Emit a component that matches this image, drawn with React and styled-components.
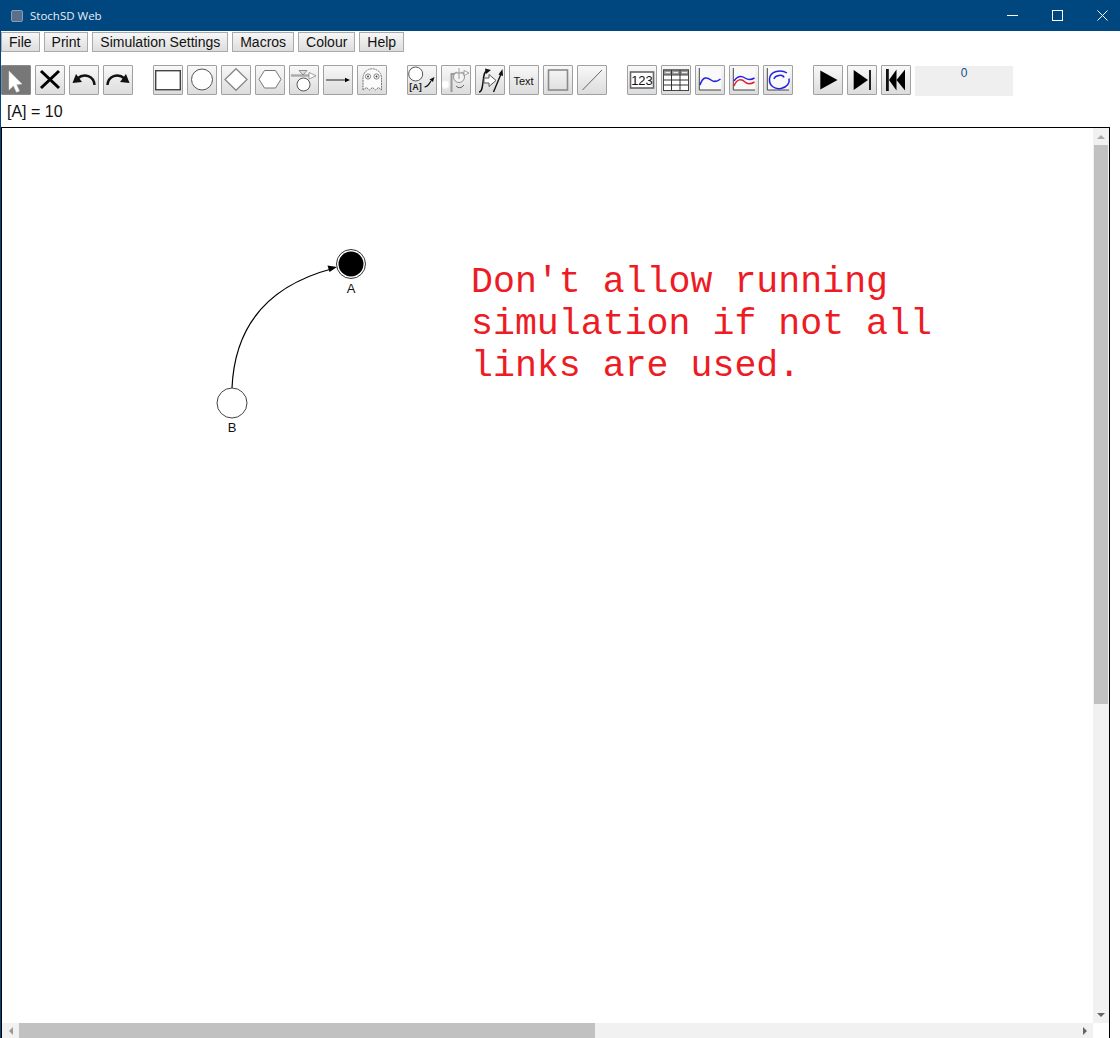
import styled, { createGlobalStyle } from "styled-components";

const GlobalStyle = createGlobalStyle`
  html, body {
    margin: 0;
    padding: 0;
    background: #fff;
    overflow: hidden;
  }
`;

const Window = styled.div`
  box-sizing: border-box;
  width: 1120px;
  height: 1038px;
  display: flex;
  flex-direction: column;
  border-left: 1px solid #00467f;
  background: #fff;
  overflow: hidden;
  font-family: "Liberation Sans", Arial, sans-serif;
`;

const TitleBar = styled.div`
  flex: none;
  height: 31px;
  margin-left: -1px;
  display: flex;
  align-items: center;
  background: #00467f;
  color: #e8eef4;
  font-family: "Open Sans", "Noto Sans", sans-serif;
  font-size: 11.5px;
`;

const AppIcon = styled.div`
  box-sizing: border-box;
  width: 12px;
  height: 12px;
  margin: 0 7px 0 11px;
  background: #58708c;
  border: 1px solid #8a9db2;
  border-radius: 2px;
`;

const WindowControls = styled.div`
  margin-left: auto;
  margin-right: -5px;
  display: flex;
`;

const WindowButton = styled.div`
  width: 45px;
  height: 31px;
  display: flex;
  align-items: center;
  justify-content: center;
`;

const MenuBar = styled.div`
  flex: none;
  display: flex;
  gap: 4px;
  padding: 1px 0 0 0;
`;

const MenuButton = styled.div`
  box-sizing: border-box;
  height: 20px;
  padding: 0 7px;
  display: flex;
  align-items: center;
  border: 1px solid #aaa;
  background: linear-gradient(#f7f7f7, #dddddd);
  color: #111;
  font-size: 14px;
`;

const ToolBar = styled.div`
  flex: none;
  display: flex;
  margin-top: 13px;
  padding-left: 0;
`;

const ToolGroup = styled.div`
  display: flex;
  gap: 4px;
  margin-right: ${(p) => p.$after ?? 0}px;
`;

const ToolButton = styled.div`
  box-sizing: border-box;
  width: 30px;
  height: 30px;
  border: 1px solid ${(p) => (p.$active ? "#8a8a8a" : "#a0a0a0")};
  border-radius: 1px;
  background: ${(p) => (p.$active ? "#777" : "linear-gradient(#f8f8f8, #dcdcdc)")};
  svg {
    display: block;
  }
`;

const Counter = styled.div`
  width: 98px;
  height: 30px;
  margin: 1px 0 0 4px;
  background: #efefef;
  color: #14508c;
  font-size: 12px;
  line-height: 14px;
  text-align: center;
`;

const StatusLine = styled.div`
  flex: none;
  height: 22px;
  padding: 5px 0 4px 6px;
  color: #111;
  font-size: 16px;
  line-height: 22px;
`;

const Canvas = styled.div`
  flex: 1;
  box-sizing: border-box;
  width: 1109px;
  min-height: 0;
  display: grid;
  grid-template-columns: 1fr 16px;
  grid-template-rows: 1fr 15px;
  border: 1px solid #000;
  border-bottom: none;
`;

const Drawing = styled.div`
  position: relative;
  overflow: hidden;
`;

const DiagramLines = styled.svg`
  position: absolute;
  left: 0;
  top: 0;
`;

const NodeLabel = styled.div`
  position: absolute;
  left: ${(p) => p.$x}px;
  top: ${(p) => p.$y}px;
  width: 30px;
  text-align: center;
  color: #111;
  font-size: 13px;
  line-height: 14px;
`;

const Note = styled.div`
  position: absolute;
  left: 469px;
  top: 134px;
  color: #ed1c24;
  font-family: "Liberation Mono", "Courier New", monospace;
  font-size: 36.6px;
  line-height: 42px;
  white-space: pre;
`;

const VerticalScroll = styled.div`
  display: flex;
  flex-direction: column;
  align-items: center;
  background: #f1f1f1;
`;

const HorizontalScroll = styled.div`
  display: flex;
  align-items: center;
  background: #f1f1f1;
`;

const ScrollEnd = styled.div`
  flex: none;
  width: ${(p) => (p.$vertical ? "16px" : "17px")};
  height: ${(p) => (p.$vertical ? "17px" : "15px")};
  display: flex;
  align-items: center;
  justify-content: center;
`;

const VerticalThumb = styled.div`
  flex: none;
  width: 14px;
  height: 559px;
  background: #c1c1c1;
`;

const HorizontalThumb = styled.div`
  flex: none;
  width: 576px;
  height: 15px;
  background: #c1c1c1;
`;

const Spacer = styled.div`
  flex: 1;
`;

const Arrow = ({ dir, color = "#666" }) => {
  const points = {
    up: "0,6 4,2 8,6",
    down: "0,2 8,2 4,6",
    left: "6,0 6,8 2,4",
    right: "2,0 2,8 6,4",
  };
  return (
    <svg width="8" height="8" viewBox="0 0 8 8">
      <polygon points={points[dir]} fill={color} />
    </svg>
  );
};

// all icons are drawn in the 30x30 coordinates of the button
const Icon = ({ children }) => (
  <svg width="28" height="28" viewBox="1 1 28 28">
    {children}
  </svg>
);

const icons = {
  select: <polygon points="8,6 21,19 15.5,19.5 18.5,26 15.5,27.2 12.5,20.8 8,25" fill="#fff" stroke="#ddd" strokeWidth="0.5" />,
  remove: <path d="M6 6 L24 23 M24 6 L6 23" stroke="#000" strokeWidth="3" fill="none" />,
  undo: (
    <>
      <path d="M25.5 20 C25 11 15 7.5 8.5 13.5" stroke="#111" strokeWidth="2.4" fill="none" />
      <polygon points="3.5,18 13,17 7,9" fill="#111" />
    </>
  ),
  redo: (
    <>
      <path d="M4.5 20 C5 11 15 7.5 21.5 13.5" stroke="#111" strokeWidth="2.4" fill="none" />
      <polygon points="26.5,18 17,17 23,9" fill="#111" />
    </>
  ),
  stock: <rect x="2.7" y="5.7" width="24.6" height="19" fill="#fff" stroke="#444" strokeWidth="1.4" />,
  aux: <circle cx="15" cy="14.5" r="10.5" fill="#fff" stroke="#555" strokeWidth="1" />,
  param: <polygon points="15,3.7 26,14.5 15,25.3 4,14.5" fill="#fff" stroke="#888" strokeWidth="1.3" />,
  hexagon: <polygon points="4,14.3 9.5,5.5 20.5,5.5 26,14.3 20.5,23 9.5,23" fill="#fff" stroke="#777" strokeWidth="1" />,
  flow: (
    <>
      <path d="M2 10.5 H20" stroke="#aaa" strokeWidth="2.4" />
      <polygon points="20,7.5 27,10.8 20,14" fill="#fff" stroke="#888" strokeWidth="0.8" />
      <polygon points="10,5.5 18,5.5 14,10" fill="#ddd" stroke="#777" strokeWidth="0.8" />
      <circle cx="14.5" cy="19.5" r="6.5" fill="#fff" stroke="#555" strokeWidth="1" />
    </>
  ),
  link: (
    <>
      <path d="M3 15 H23" stroke="#222" strokeWidth="1" />
      <polygon points="22,12.7 27,15 22,17.3" fill="#000" />
    </>
  ),
  ghost: (
    <>
      <path
        d="M6 25 V13 A9.2 9.2 0 0 1 24.5 13 V25 L21.5 22.5 L18.5 25 L15.5 22.5 L12.5 25 L9.5 22.5 Z"
        fill="#fafafa"
        stroke="#777"
        strokeWidth="1"
        strokeDasharray="2 0.7"
      />
      <circle cx="11" cy="11.5" r="2.6" fill="#fff" stroke="#666" strokeWidth="0.8" />
      <circle cx="19.5" cy="11.5" r="2.6" fill="#fff" stroke="#666" strokeWidth="0.8" />
      <circle cx="11" cy="11.5" r="0.9" fill="#333" />
      <circle cx="19.5" cy="11.5" r="0.9" fill="#333" />
    </>
  ),
  ghostLink: (
    <>
      <circle cx="8.7" cy="9" r="7" fill="#fff" stroke="#555" strokeWidth="1" />
      <text x="8.5" y="24.5" textAnchor="middle" fontSize="9" fontWeight="bold" fontFamily="Liberation Sans" fill="#222">
        [A]
      </text>
      <path d="M17.5 22 C21 22 22 19 24 16" stroke="#111" strokeWidth="1.2" fill="none" />
      <polygon points="22.5,14.5 27.5,12 26,17" fill="#111" />
    </>
  ),
  takeoff: (
    <>
      <circle cx="4.3" cy="19.5" r="4" fill="#fff" stroke="#eee" strokeWidth="1" />
      <path d="M10.5 27 V9 H16" stroke="#999" strokeWidth="2" fill="none" />
      <circle cx="18" cy="12" r="5.5" fill="#f4f4f4" stroke="#888" strokeWidth="0.9" />
      <circle cx="18" cy="4.5" r="3" fill="#fafafa" />
      <path d="M18 3 V14 M13.5 8 H25" stroke="#999" strokeWidth="1" />
      <polygon points="23,5.5 28,8 23,10.5" fill="#fff" stroke="#888" strokeWidth="0.8" />
      <path d="M15 21 Q19 25 23 20" stroke="#666" strokeWidth="1" fill="none" />
    </>
  ),
  curves: (
    <>
      <path d="M4 27 C10 27 6 7 12 6" stroke="#111" strokeWidth="1.4" fill="none" />
      <polygon points="10,3.5 16,5 11,9" fill="#111" />
      <path d="M9 13 H14 V9.5 L21 15.5 L14 21.5 V18 H9 Z" fill="#fff" stroke="#555" strokeWidth="1" />
      <path d="M18.5 27 L26 9" stroke="#111" strokeWidth="1.4" />
      <polygon points="23.5,9.5 27.5,4 28,11" fill="#111" />
    </>
  ),
  text: (
    <text x="14.5" y="20" textAnchor="middle" fontSize="11" fontFamily="Liberation Sans" fill="#111">
      Text
    </text>
  ),
  frame: <rect x="5.5" y="5" width="19" height="20" fill="none" stroke="#8a8a8a" strokeWidth="1.6" />,
  line: <path d="M5.5 25 L25 5" stroke="#666" strokeWidth="1" />,
  number: (
    <>
      <rect x="3.5" y="7" width="23" height="16" fill="#fff" stroke="#666" strokeWidth="1.6" />
      <text x="15" y="20" textAnchor="middle" fontSize="13" fontFamily="Liberation Sans" fill="#111">
        123
      </text>
    </>
  ),
  table: (
    <>
      <rect x="2.5" y="5" width="25" height="20.5" fill="#fff" stroke="#444" strokeWidth="1" />
      <rect x="2.5" y="5" width="25" height="5" fill="#999" stroke="#444" strokeWidth="1" />
      <path d="M10.5 5 V25.5 M19 5 V25.5 M2.5 15 H27.5 M2.5 20 H27.5" stroke="#333" strokeWidth="1" />
      <path d="M4.5 7.5 H9 M12.5 7.5 H17 M21 7.5 H26" stroke="#eee" strokeWidth="1" />
    </>
  ),
  timeplot: (
    <>
      <rect x="4.3" y="3" width="22" height="22" fill="#fafafa" />
      <path d="M4.3 3 V25 H26" stroke="#444" strokeWidth="1" fill="none" />
      <path d="M5 20 C8 11 12 12 16 15 S23 16 25.5 14" stroke="#2222e8" strokeWidth="1.5" fill="none" />
    </>
  ),
  compare: (
    <>
      <rect x="4.3" y="3" width="22" height="22" fill="#fafafa" />
      <path d="M4.3 3 V25 H26" stroke="#444" strokeWidth="1" fill="none" />
      <path d="M5 16 C9 10 13 11 16 13 S22 15 25.5 13" stroke="#2222e8" strokeWidth="1.5" fill="none" />
      <path d="M5 21 C8 13 13 14 16 17 S22 19 25.5 17" stroke="#e81c2c" strokeWidth="1.5" fill="none" />
    </>
  ),
  xyplot: (
    <>
      <rect x="4.3" y="3" width="22" height="22" fill="#fafafa" />
      <path d="M4.3 3 V25 H26" stroke="#444" strokeWidth="1" fill="none" />
      <path
        d="M11 14 C12 10 20 9 21 12.5 M24 8 C18 4 7 6 6.5 14 C6 21 12 24.5 18 23.5 C24 22.5 27 18 26 13.5"
        stroke="#2222e8"
        strokeWidth="1.5"
        fill="none"
      />
    </>
  ),
  play: <polygon points="7.3,5.5 24.5,15 7.3,24.5" fill="#000" />,
  step: (
    <>
      <polygon points="6.7,5 21,15 6.7,25" fill="#000" />
      <rect x="22" y="5" width="2" height="20" fill="#222" />
    </>
  ),
  rewind: (
    <>
      <rect x="5" y="4" width="2.8" height="22" fill="#111" />
      <polygon points="8,15 15.5,4.5 15.5,25.5" fill="#000" />
      <polygon points="15.5,15 24,4.5 24,25.5" fill="#000" />
    </>
  ),
};

const toolGroups = [
  { after: 20, tools: ["select", "remove", "undo", "redo"] },
  { after: 20, tools: ["stock", "aux", "param", "hexagon", "flow", "link", "ghost"] },
  { after: 20, tools: ["ghostLink", "takeoff", "curves", "text", "frame", "line"] },
  { after: 20, tools: ["number", "table", "timeplot", "compare", "xyplot"] },
  { after: 0, tools: ["play", "step", "rewind"] },
];

const menus = ["File", "Print", "Simulation Settings", "Macros", "Colour", "Help"];

const App = () => {
  return (
    <Window>
      <GlobalStyle />
      <TitleBar>
        <AppIcon />
        StochSD Web
        <WindowControls>
          <WindowButton>
            <svg width="11" height="11" viewBox="0 0 11 11">
              <path d="M0 5.5 H11" stroke="#fff" strokeWidth="1" />
            </svg>
          </WindowButton>
          <WindowButton>
            <svg width="11" height="11" viewBox="0 0 11 11">
              <rect x="0.5" y="0.5" width="10" height="10" fill="none" stroke="#fff" strokeWidth="1" />
            </svg>
          </WindowButton>
          <WindowButton>
            <svg width="11" height="11" viewBox="0 0 11 11">
              <path d="M0.5 0.5 L10.5 10.5 M10.5 0.5 L0.5 10.5" stroke="#fff" strokeWidth="1" />
            </svg>
          </WindowButton>
        </WindowControls>
      </TitleBar>

      <MenuBar>
        {menus.map((menu) => (
          <MenuButton key={menu}>{menu}</MenuButton>
        ))}
      </MenuBar>

      <ToolBar>
        {toolGroups.map((group) => (
          <ToolGroup key={group.tools[0]} $after={group.after}>
            {group.tools.map((tool) => (
              <ToolButton key={tool} $active={tool === "select"}>
                <Icon>{icons[tool]}</Icon>
              </ToolButton>
            ))}
          </ToolGroup>
        ))}
        <Counter>0</Counter>
      </ToolBar>

      <StatusLine>[A] = 10</StatusLine>

      <Canvas>
        <Drawing>
          <DiagramLines width="1091" height="895" viewBox="2 128 1091 895">
            <path d="M232 388 Q236 294 333 268.5" fill="none" stroke="#000" strokeWidth="1.2" />
            <polygon points="337,267 327.5,265.5 329.5,272" fill="#000" />
            <circle cx="351" cy="264" r="14.5" fill="#fff" stroke="#333" strokeWidth="1" />
            <circle cx="351" cy="264" r="12.5" fill="#000" />
            <circle cx="232" cy="403" r="15" fill="#fff" stroke="#444" strokeWidth="1" />
          </DiagramLines>
          <NodeLabel $x={334} $y={154}>A</NodeLabel>
          <NodeLabel $x={215} $y={293}>B</NodeLabel>
          <Note>{"Don't allow running\nsimulation if not all\nlinks are used."}</Note>
        </Drawing>
        <VerticalScroll>
          <ScrollEnd $vertical>
            <Arrow dir="up" color="#aaa" />
          </ScrollEnd>
          <VerticalThumb />
          <Spacer />
          <ScrollEnd $vertical>
            <Arrow dir="down" />
          </ScrollEnd>
        </VerticalScroll>
        <HorizontalScroll>
          <ScrollEnd>
            <Arrow dir="left" color="#999" />
          </ScrollEnd>
          <HorizontalThumb />
          <Spacer />
          <ScrollEnd>
            <Arrow dir="right" />
          </ScrollEnd>
        </HorizontalScroll>
        <div />
      </Canvas>
    </Window>
  );
};

export default App;
